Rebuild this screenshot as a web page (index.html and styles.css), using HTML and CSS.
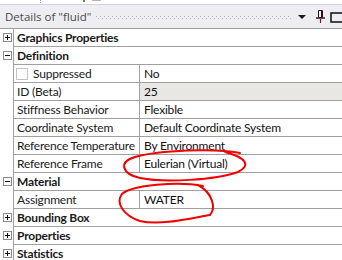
FILE: index.html
```html
<!DOCTYPE html>
<html lang="en">
<head>
  <meta charset="UTF-8" />
  <title>Details of "fluid"</title>
  <link rel="stylesheet" href="styles.css">
</head>
<body>
  <div class="strip">
    <span class="mark grey"></span>
    <span class="mark green"></span>
    <span class="mark dash"></span>
  </div>

  <div class="panel-head">
    <span class="title">Details of "fluid"</span>
    <span class="grip"></span>
    <svg class="icon drop" width="9" height="5" viewBox="0 0 9 5"><path d="M0 0H8L4 4Z" fill="#1b1b1b"/></svg>
    <svg class="icon pin" width="9" height="13" viewBox="0 0 9 13">
      <path d="M2.5 0.5H6.5V7.5H2.5Z" fill="none" stroke="#2a1416" stroke-width="1"/>
      <path d="M5.5 1V7" stroke="#2a1416" stroke-width="1"/>
      <path d="M0 8H9" stroke="#2a1416" stroke-width="1.4"/>
      <path d="M4.5 8.5V13" stroke="#8a1010" stroke-width="1.2"/>
    </svg>
    <svg class="icon box" width="12" height="11" viewBox="0 0 12 11"><rect x="1" y="1" width="12" height="9" fill="none" stroke="#1b1b1b" stroke-width="1.6"/></svg>
  </div>

  <div class="grid">
    <div class="row cat">
      <span class="gutter"><span class="toggle plus"></span></span>
      <div class="cell">Graphics Properties</div>
    </div>
    <div class="row cat">
      <span class="gutter"><span class="toggle"></span></span>
      <div class="cell">Definition</div>
    </div>
    <div class="row">
      <span class="gutter"></span>
      <div class="label"><span class="check"></span>Suppressed</div>
      <div class="value">No</div>
    </div>
    <div class="row">
      <span class="gutter"></span>
      <div class="label">ID (Beta)</div>
      <div class="value readonly">25</div>
    </div>
    <div class="row">
      <span class="gutter"></span>
      <div class="label">Stiffness Behavior</div>
      <div class="value">Flexible</div>
    </div>
    <div class="row">
      <span class="gutter"></span>
      <div class="label">Coordinate System</div>
      <div class="value">Default Coordinate System</div>
    </div>
    <div class="row">
      <span class="gutter"></span>
      <div class="label">Reference Temperature</div>
      <div class="value">By Environment</div>
    </div>
    <div class="row">
      <span class="gutter"></span>
      <div class="label">Reference Frame</div>
      <div class="value">Eulerian (Virtual)</div>
    </div>
    <div class="row cat">
      <span class="gutter"><span class="toggle"></span></span>
      <div class="cell">Material</div>
    </div>
    <div class="row">
      <span class="gutter"></span>
      <div class="label">Assignment</div>
      <div class="value">WATER</div>
    </div>
    <div class="row cat">
      <span class="gutter"><span class="toggle plus"></span></span>
      <div class="cell">Bounding Box</div>
    </div>
    <div class="row cat">
      <span class="gutter"><span class="toggle plus"></span></span>
      <div class="cell">Properties</div>
    </div>
    <div class="row cat">
      <span class="gutter"><span class="toggle plus"></span></span>
      <div class="cell">Statistics</div>
    </div>
  </div>

  <!-- hand drawn annotation on top of the panel -->
  <svg class="scribble" width="342" height="260" viewBox="0 0 342 260">
    <path d="M240 153 C215 148 160 150 135 157 C118 162 122 174 140 178 C165 183 215 180 238 172 C250 166 248 158 225 152" />
    <path d="M203 186 C178 181 132 185 122 194 C115 203 124 216 140 221 C160 226 192 218 210 215 C216 208 213 193 198 185" />
  </svg>
</body>
</html>
```

FILE: styles.css
```css
html, body {
  margin: 0;
  padding: 0;
  background: #fff;
}
body {
  position: relative;
  width: 342px;
  height: 260px;
  overflow: hidden;
  font-family: Lato, "Open Sans", sans-serif;
  font-size: 12px;
  letter-spacing: -0.2px;
  color: #1a1a1a;
}
.strip {
  height: 4px;
  display: flex;
  align-items: flex-start;
  border-bottom: 1px solid #d4d2e6;
}
.mark {
  display: block;
  height: 3px;
}
.mark.grey {
  margin-left: 40px;
  width: 1px;
  background: repeating-linear-gradient(#999 0 1px, transparent 1px 2px);
}
.mark.green {
  margin-left: 42px;
  width: 2px;
  height: 2px;
  background: #3a9a3a;
}
.mark.dash {
  margin-left: 7px;
  width: 9px;
  height: 1px;
  background: #b5b5b5;
}
.panel-head {
  height: 23px;
  display: flex;
  align-items: center;
  background: #eeeef2;
  border-bottom: 1px solid #a0a0a0;
  padding-left: 5px;
}
.title {
  color: #4a4a4a;
  font-family: "Open Sans", sans-serif;
  font-size: 11.5px;
  letter-spacing: 0;
}
.grip {
  flex: 1;
  height: 3px;
  margin: 1px 6px 0 5px;
  background-image:
    conic-gradient(from 270deg at 1px 1px, #b4b4b4 25%, transparent 0),
    conic-gradient(from 270deg at 1px 1px, #b4b4b4 25%, transparent 0);
  background-size: 4px 4px;
  background-position: 0 0, 2px 2px;
}
.icon {
  display: block;
  flex: none;
}
.drop {
  margin-right: 9px;
  margin-top: 1px;
}
.pin {
  margin-right: 5px;
}
.box {
  margin-top: 1px;
}
.grid {
  display: flex;
  flex-direction: column;
}
.row {
  display: flex;
  height: 18px;
}
.gutter {
  flex: none;
  width: 13px;
  border-right: 1px solid #a0a0a0;
  position: relative;
}
.toggle {
  position: absolute;
  left: 3px;
  top: 4px;
  width: 7px;
  height: 7px;
  border: 1px solid #8c8c8c;
  background: #fff;
}
.toggle::before,
.toggle.plus::after {
  content: "";
  position: absolute;
  background: #111;
}
.toggle::before {
  left: 1px;
  top: 3px;
  width: 5px;
  height: 1px;
}
.toggle.plus::after {
  left: 3px;
  top: 1px;
  width: 1px;
  height: 5px;
}
.cell,
.label,
.value {
  border-bottom: 1px solid #a0a0a0;
  display: flex;
  align-items: center;
  white-space: nowrap;
  overflow: hidden;
}
.cell {
  flex: 1;
  padding-left: 3px;
  font-weight: 700;
}
.label {
  flex: none;
  width: 126px;
  padding-left: 3px;
  box-sizing: border-box;
  border-right: 1px solid #a0a0a0;
}
.value {
  flex: 1;
  padding-left: 4px;
  color: #111;
}
.value.readonly {
  background: #e8e7e4;
}
.check {
  width: 10px;
  height: 10px;
  border: 1px solid #c4c4c4;
  margin: 0 5px 0 -1px;
  background: #fff;
}
.scribble {
  position: absolute;
  left: 0;
  top: 0;
  pointer-events: none;
}
.scribble path {
  fill: none;
  stroke: #f20000;
  stroke-width: 2;
  stroke-linecap: round;
}
```
